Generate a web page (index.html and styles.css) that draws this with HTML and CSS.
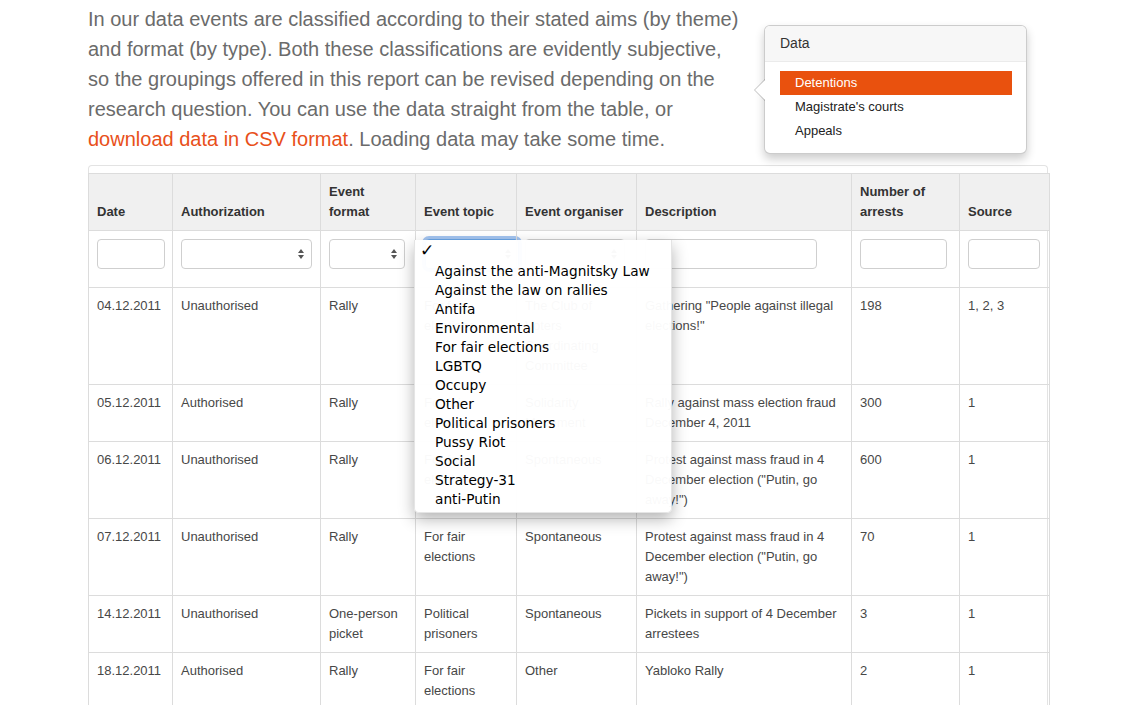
FILE: index.html
```html
<!DOCTYPE html>
<html>
<head>
<meta charset="utf-8">
<link rel="stylesheet" href="styles.css">
</head>
<body>
<div class="page">
  <p class="intro">In our data events are classified according to their stated aims (by theme) and format (by type). Both these classifications are evidently subjective, so the groupings offered in this report can be revised depending on the research question. You can use the data straight from the table, or <a href="#" class="link">download data in CSV format</a>. Loading data may take some time.</p>

  <div class="popover">
    <div class="popover-arrow"></div>
    <div class="popover-title">Data</div>
    <ul class="popover-menu">
      <li class="active">Detentions</li>
      <li>Magistrate's courts</li>
      <li>Appeals</li>
    </ul>
  </div>

  <div class="table-wrap">
    <table class="data">
      <colgroup>
        <col class="c-date"><col class="c-auth"><col class="c-format"><col class="c-topic"><col class="c-org"><col class="c-desc"><col class="c-num"><col class="c-src">
      </colgroup>
      <thead>
        <tr>
          <th>Date</th>
          <th>Authorization</th>
          <th>Event format</th>
          <th>Event topic</th>
          <th>Event organiser</th>
          <th>Description</th>
          <th>Number of arrests</th>
          <th>Source</th>
        </tr>
        <tr class="filters">
          <td><div class="input w-date"></div></td>
          <td><div class="select w-auth"><svg width="8" height="12" viewBox="0 0 8 12"><path d="M4 1 L7 5 L1 5 Z M1 7 L7 7 L4 11 Z" fill="#555"/></svg></div></td>
          <td><div class="select w-format"><svg width="8" height="12" viewBox="0 0 8 12"><path d="M4 1 L7 5 L1 5 Z M1 7 L7 7 L4 11 Z" fill="#555"/></svg></div></td>
          <td><div class="select w-topic focused"><svg width="8" height="12" viewBox="0 0 8 12"><path d="M4 1 L7 5 L1 5 Z M1 7 L7 7 L4 11 Z" fill="#555"/></svg></div></td>
          <td><div class="select w-org"><svg width="8" height="12" viewBox="0 0 8 12"><path d="M4 1 L7 5 L1 5 Z M1 7 L7 7 L4 11 Z" fill="#555"/></svg></div></td>
          <td><div class="input w-desc"></div></td>
          <td><div class="input w-num"></div></td>
          <td><div class="input w-src"></div></td>
        </tr>
      </thead>
      <tbody>
        <tr>
          <td>04.12.2011</td><td>Unauthorised</td><td>Rally</td><td>For fair elections</td><td>The Club of Voters Coordinating Committee</td><td>Gathering "People against illegal elections!"</td><td>198</td><td>1, 2, 3</td>
        </tr>
        <tr>
          <td>05.12.2011</td><td>Authorised</td><td>Rally</td><td>For fair elections</td><td>Solidarity Movement</td><td>Rally against mass election fraud December 4, 2011</td><td>300</td><td>1</td>
        </tr>
        <tr>
          <td>06.12.2011</td><td>Unauthorised</td><td>Rally</td><td>For fair elections</td><td>Spontaneous</td><td>Protest against mass fraud in 4 December election ("Putin, go away!")</td><td>600</td><td>1</td>
        </tr>
        <tr>
          <td>07.12.2011</td><td>Unauthorised</td><td>Rally</td><td>For fair elections</td><td>Spontaneous</td><td>Protest against mass fraud in 4 December election ("Putin, go away!")</td><td>70</td><td>1</td>
        </tr>
        <tr>
          <td>14.12.2011</td><td>Unauthorised</td><td>One-person picket</td><td>Political prisoners</td><td>Spontaneous</td><td>Pickets in support of 4 December arrestees</td><td>3</td><td>1</td>
        </tr>
        <tr>
          <td>18.12.2011</td><td>Authorised</td><td>Rally</td><td>For fair elections</td><td>Other</td><td>Yabloko Rally</td><td>2</td><td>1</td>
        </tr>
      </tbody>
    </table>
  </div>

  <ul class="native-menu">
    <li class="checked"><span class="check">✓</span></li>
    <li>Against the anti-Magnitsky Law</li>
    <li>Against the law on rallies</li>
    <li>Antifa</li>
    <li>Environmental</li>
    <li>For fair elections</li>
    <li>LGBTQ</li>
    <li>Occupy</li>
    <li>Other</li>
    <li>Political prisoners</li>
    <li>Pussy Riot</li>
    <li>Social</li>
    <li>Strategy-31</li>
    <li>anti-Putin</li>
  </ul>
</div>
</body>
</html>
```

FILE: styles.css
```css
html, body {
  margin: 0;
  padding: 0;
  background: #fff;
  overflow: hidden;
}

body {
  font-family: "Liberation Sans", Arial, Helvetica, sans-serif;
  color: #444;
}

.page {
  position: relative;
  width: 960px;
  margin-left: 88px;
  padding-top: 4px;
}

.intro {
  margin: 0;
  width: 656px;
  font-size: 20px;
  line-height: 30px;
  color: #6b6b6b;
}

.link {
  color: #e8501a;
  text-decoration: none;
}

/* Popover */
.popover {
  position: absolute;
  left: 676px;
  top: 25px;
  width: 261px;
  background: #fff;
  border: 1px solid rgba(0, 0, 0, 0.2);
  border-radius: 6px;
  box-shadow: 0 5px 10px rgba(0, 0, 0, 0.2);
}

.popover-arrow {
  position: absolute;
  left: -11px;
  top: 50%;
  margin-top: -11px;
  width: 0;
  height: 0;
  border-top: 11px solid transparent;
  border-bottom: 11px solid transparent;
  border-right: 11px solid rgba(0, 0, 0, 0.25);
}

.popover-arrow::after {
  content: "";
  position: absolute;
  left: 1px;
  top: -10px;
  border-top: 10px solid transparent;
  border-bottom: 10px solid transparent;
  border-right: 10px solid #fff;
}

.popover-title {
  padding: 8px 15px;
  height: 19px;
  font-size: 14px;
  line-height: 19px;
  color: #333;
  background: #f7f7f7;
  border-bottom: 1px solid #ebebeb;
  border-radius: 5px 5px 0 0;
}

.popover-menu {
  list-style: none;
  margin: 0;
  padding: 9px 14px 10px 15px;
}

.popover-menu li {
  height: 24px;
  line-height: 24px;
  padding-left: 15px;
  font-size: 13px;
  color: #222;
}

.popover-menu li.active {
  background: #e9510e;
  color: #fff;
}

/* Table */
.table-wrap {
  margin-top: 11px;
  border: 1px solid #e3e3e3;
  border-bottom: none;
  border-radius: 4px 4px 0 0;
  padding-top: 8px;
}

.data {
  width: 961px;
  margin-left: -1px;
  margin-top: -1px;
  border-collapse: collapse;
  table-layout: fixed;
  font-size: 13px;
  line-height: 20px;
}

.c-date { width: 84px; }
.c-auth { width: 148px; }
.c-format { width: 95px; }
.c-topic { width: 101px; }
.c-org { width: 120px; }
.c-desc { width: 215px; }
.c-num { width: 108px; }
.c-src { width: 90px; }

.data th,
.data td {
  border: 1px solid #dcdcdc;
  padding: 8px;
  text-align: left;
  vertical-align: top;
}

.data th {
  background: #f0f0f0;
  color: #333;
  font-weight: bold;
  vertical-align: bottom;
}

.data td {
  color: #474747;
}

.data .filters td {
  padding: 8px 8px 18px;
}

.input,
.select {
  box-sizing: border-box;
  height: 30px;
  border: 1px solid #cfcfcf;
  border-radius: 4px;
  background: #fff;
}

.select {
  display: flex;
  align-items: center;
  justify-content: flex-end;
  padding-right: 6px;
}

.select svg {
  display: block;
}

.select.focused {
  border-color: #6aa6e8;
  box-shadow: 0 0 0 3px rgba(90, 150, 230, 0.55);
}

.w-date { width: 68px; }
.w-auth { width: 131px; }
.w-format { width: 76px; }
.w-topic { width: 94px; margin-left: 1px; }
.w-org { width: 100px; }
.w-desc { width: 172px; }
.w-num { width: 87px; }
.w-src { width: 72px; }

/* Native select menu */
.native-menu {
  position: absolute;
  left: 326px;
  top: 240px;
  width: 258px;
  height: 273px;
  box-sizing: border-box;
  margin: 0;
  padding: 3px 0 0;
  list-style: none;
  background: rgba(255, 255, 255, 0.97);
  border: 1px solid rgba(0, 0, 0, 0.1);
  border-top: none;
  border-radius: 0 0 5px 5px;
  box-shadow: 0 6px 16px rgba(0, 0, 0, 0.3);
  font-family: "DejaVu Sans", sans-serif;
  font-size: 13.7px;
  line-height: 19px;
  color: #000;
}

.native-menu li {
  height: 19px;
  padding-left: 20px;
  white-space: nowrap;
}

.native-menu li.checked {
  position: relative;
}

.native-menu .check {
  position: absolute;
  left: 5px;
  top: -2px;
  font-size: 17px;
  font-weight: bold;
}
```
